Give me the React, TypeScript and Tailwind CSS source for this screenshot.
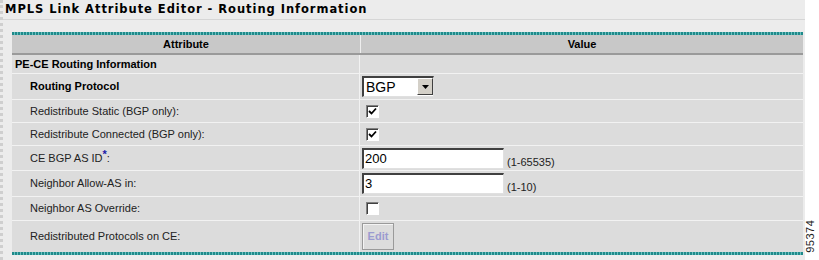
import React from 'react';

const teal =
  'h-[3px] bg-[repeating-linear-gradient(90deg,#1f8a8a_0_2px,#6cc0c0_2px_3px)]';

function Check({ checked }: { checked: boolean }) {
  return (
    <div className="w-[13px] h-[13px] bg-white border-t border-l border-t-[#808080] border-l-[#808080] border-b border-r border-b-white border-r-white flex items-center justify-center shadow-[inset_1px_1px_0_#404040]">
      {checked && (
        <svg width="9" height="9" viewBox="0 0 9 9">
          <path d="M1 4 L3.5 6.5 L8 1.5" stroke="#000" strokeWidth="1.8" fill="none" />
        </svg>
      )}
    </div>
  );
}

function TextBox({ value }: { value: string }) {
  return (
    <div className="w-[142px] h-[21px] bg-white border-t-2 border-l-2 border-t-[#404040] border-l-[#404040] border-b border-r border-b-[#e0e0e0] border-r-[#e0e0e0] px-[1px] text-[13px] leading-[18px] text-black">
      {value}
    </div>
  );
}

function Row({
  label,
  bold,
  h,
  children,
}: {
  label: React.ReactNode;
  bold?: boolean;
  h: string;
  children?: React.ReactNode;
}) {
  return (
    <div className={`flex border-t border-[#f2f2f2] ${h}`}>
      <div
        className={`w-[348px] border-r border-[#f2f2f2] pl-[18px] flex items-center ${
          bold ? 'font-bold text-black' : 'text-[#222]'
        }`}
      >
        {label}
      </div>
      <div className="flex-1 flex items-center pl-[2px]">{children}</div>
    </div>
  );
}

export default function App() {
  return (
    <div className="w-[819px] h-[260px] bg-white flex font-['Liberation_Sans',Arial,sans-serif] text-[11px] relative">
      <div className="w-[805px] h-full bg-[#ececec] border-l-[3px] border-dotted border-[#cfcfcf]">
        <div className="h-[20px] border-b border-[#d6d6d6] pl-[2px] pt-[2px] font-['DejaVu_Sans',sans-serif] font-bold text-[11.5px] tracking-[0.95px] text-black leading-[14px]">
          MPLS Link Attribute Editor - Routing Information
        </div>
        <div className="ml-[9px] mt-[12px] w-[791px] bg-[#dcdcdc]">
          <div className={teal} />
          <div className="flex h-[20px] bg-[#c8c8c8] border-b-2 border-[#9a9a9a] font-bold text-black text-[11px]">
            <div className="w-[349px] border-r border-[#eeeeee] flex items-center justify-center">
              Attribute
            </div>
            <div className="flex-1 flex items-center justify-center">Value</div>
          </div>
          <div className="flex h-[18px]">
            <div className="w-[348px] border-r border-[#f2f2f2] pl-[3px] flex items-center font-bold text-black">
              PE-CE Routing Information
            </div>
            <div className="flex-1" />
          </div>
          <Row label="Routing Protocol" bold h="h-[26px]">
            <div className="w-[72px] h-[21px] flex bg-white border-t-2 border-l-2 border-t-[#404040] border-l-[#404040] border-b border-r border-b-[#e0e0e0] border-r-[#e0e0e0]">
              <div className="flex-1 text-[14px] leading-[18px] pl-[2px] text-black">BGP</div>
              <div className="w-[16px] h-[17px] bg-[#d4d0c8] border border-t-white border-l-white border-b-[#404040] border-r-[#404040] flex items-center justify-center">
                <svg width="7" height="4" viewBox="0 0 7 4">
                  <path d="M0 0 H7 L3.5 4 Z" fill="#000" />
                </svg>
              </div>
            </div>
          </Row>
          <Row label="Redistribute Static (BGP only):" h="h-[23px]">
            <div className="pl-[4px]">
              <Check checked />
            </div>
          </Row>
          <Row label="Redistribute Connected (BGP only):" h="h-[23px]">
            <div className="pl-[4px]">
              <Check checked />
            </div>
          </Row>
          <Row
            label={
              <span>
                CE BGP AS ID
                <span className="text-[#1a1aa8] font-bold relative -top-[4px]">*</span>:
              </span>
            }
            h="h-[25px]"
          >
            <TextBox value="200" />
            <span className="ml-[3px] mt-[8px] text-[#222]">(1-65535)</span>
          </Row>
          <Row label="Neighbor Allow-AS in:" h="h-[26px]">
            <TextBox value="3" />
            <span className="ml-[3px] mt-[8px] text-[#222]">(1-10)</span>
          </Row>
          <Row label="Neighbor AS Override:" h="h-[24px]">
            <div className="pl-[4px]">
              <Check checked={false} />
            </div>
          </Row>
          <Row label="Redistributed Protocols on CE:" h="h-[32px]">
            <div className="w-[32px] h-[27px] border border-[#9a9a9a] shadow-[inset_1px_1px_0_#f4f4f4] flex items-center justify-center font-bold text-[#9b9bd0]">
              Edit
            </div>
          </Row>
          <div className={teal} />
        </div>
      </div>
      <div className="absolute left-[804px] top-[218px] w-[14px] h-[36px] flex items-center justify-center">
        <span className="-rotate-90 whitespace-nowrap text-[11px] text-[#222] tracking-[0.5px]">95374</span>
      </div>
    </div>
  );
}
